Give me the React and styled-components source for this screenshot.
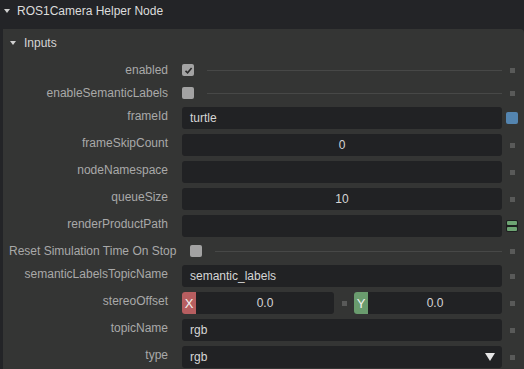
import React from "react"
import styled, { createGlobalStyle } from "styled-components"

const GlobalStyle = createGlobalStyle`
  html, body {
    margin: 0;
    padding: 0;
    background-color: #232427;
    font-family: "Liberation Sans", Arial, sans-serif;
    overflow: hidden;
  }
`

const Page = styled.div`
  width: 524px;
  height: 369px;
  background-color: #232427;
  overflow: hidden;
`

const TitleBar = styled.div`
  height: 22px;
  display: flex;
  align-items: center;
  gap: 7px;
  padding-left: 4px;
  color: #dcdcdc;
  font-size: 12px;
`

const Caret = styled.span`
  width: 0;
  height: 0;
  border-left: ${(p) => p.size}px solid transparent;
  border-right: ${(p) => p.size}px solid transparent;
  border-top: ${(p) => p.size + 1}px solid ${(p) => p.color || "#d0d0d0"};
`

const Panel = styled.section`
  margin: 7px 0 0 3px;
  background-color: #343534;
  border-top-right-radius: 4px;
  padding: 0 2px 8px 0;
`

const PanelHeader = styled.div`
  height: 28px;
  display: flex;
  align-items: center;
  gap: 8px;
  padding-left: 7px;
  color: #d4d4d4;
  font-size: 12px;
`

const Rows = styled.div`
  display: flex;
  flex-direction: column;
  gap: 5px;
  padding-top: 4px;
`

const Row = styled.div`
  display: flex;
  align-items: center;
  height: ${(p) => (p.$compact ? 18 : 22)}px;
`

const Label = styled.div`
  box-sizing: border-box;
  min-width: 165px;
  padding-left: 6px;
  margin-right: 14px;
  text-align: right;
  white-space: nowrap;
  color: #a9a9a9;
  font-size: 12px;
  line-height: 22px;
  align-self: flex-start;
  margin-top: -2px;
`

const Control = styled.div`
  flex: 1;
  display: flex;
  align-items: center;
  height: 100%;
  min-width: 0;
`

const Checkbox = styled.span`
  width: 12px;
  height: 12px;
  border-radius: 2px;
  background-color: #a3a3a3;
  display: flex;
  align-items: center;
  justify-content: center;
  flex-shrink: 0;
`

const Track = styled.span`
  flex: 1;
  height: 1px;
  margin-left: 13px;
  background-color: #474847;
`

const Field = styled.div`
  box-sizing: border-box;
  flex: 1;
  height: 22px;
  display: flex;
  align-items: center;
  justify-content: ${(p) => (p.$center ? "center" : "space-between")};
  padding: 0 ${(p) => (p.$center ? 0 : 7)}px 0 ${(p) => (p.$center ? 0 : 8)}px;
  background-color: #212224;
  border-radius: 3px;
  color: #d6d6d6;
  font-size: 12px;
  overflow: hidden;
`

const VectorGrid = styled.div`
  flex: 1;
  display: grid;
  grid-template-columns: 152px 20px 1fr;
  align-items: center;
  height: 22px;
`

const AxisField = styled.div`
  height: 22px;
  display: flex;
  align-items: center;
  background-color: #212224;
  border-radius: 3px;
  color: #d6d6d6;
  font-size: 12px;
`

const AxisBadge = styled.span`
  width: 14px;
  height: 22px;
  border-radius: 3px 0 0 3px;
  background-color: ${(p) => p.color};
  color: #f0f0f0;
  font-size: 13px;
  display: flex;
  align-items: center;
  justify-content: center;
`

const AxisValue = styled.span`
  flex: 1;
  text-align: center;
`

const Indicator = styled.div`
  width: 20px;
  display: flex;
  align-items: center;
  justify-content: center;
  flex-shrink: 0;
`

const Dot = styled.span`
  width: 5px;
  height: 5px;
  background-color: #595a59;
  display: block;
`

const ConnectedDot = styled.span`
  width: 12px;
  height: 12px;
  border-radius: 2px;
  background-color: #5485b0;
  display: block;
`

const BundleDot = styled.span`
  box-sizing: border-box;
  width: 12px;
  height: 12px;
  border-radius: 2px;
  padding: 1px;
  background-color: #1d1e1f;
  display: flex;
  flex-direction: column;
  justify-content: space-between;
  > span {
    height: 4px;
    border-radius: 1px;
    background-color: #6da473;
  }
`

const DropArrow = styled.span`
  width: 0;
  height: 0;
  border-left: 5px solid transparent;
  border-right: 5px solid transparent;
  border-top: 8px solid #e6e6e6;
`

const Check = () => (
  <svg width="9" height="9" viewBox="0 0 9 9">
    <path d="M1.5 4.8 L3.6 6.8 L7.6 2" fill="none" stroke="#2a2a2a" strokeWidth="1.6" />
  </svg>
)

const BoolRow = ({ label, checked }) => (
  <Row $compact>
    <Label>{label}</Label>
    <Control>
      <Checkbox>{checked ? <Check /> : null}</Checkbox>
      <Track />
    </Control>
    <Indicator>
      <Dot />
    </Indicator>
  </Row>
)

const TextRow = ({ label, value, center, port, dropdown }) => (
  <Row>
    <Label>{label}</Label>
    <Field $center={center}>
      <span>{value}</span>
      {dropdown ? <DropArrow /> : null}
    </Field>
    <Indicator>
      {port === "connected" ? <ConnectedDot /> : null}
      {port === "bundle" ? (
        <BundleDot>
          <span />
          <span />
        </BundleDot>
      ) : null}
      {!port ? <Dot /> : null}
    </Indicator>
  </Row>
)

const rows = [
  { kind: "bool", label: "enabled", checked: true },
  { kind: "bool", label: "enableSemanticLabels" },
  { kind: "text", label: "frameId", value: "turtle", port: "connected" },
  { kind: "text", label: "frameSkipCount", value: "0", center: true },
  { kind: "text", label: "nodeNamespace", value: "" },
  { kind: "text", label: "queueSize", value: "10", center: true },
  { kind: "text", label: "renderProductPath", value: "", port: "bundle" },
  { kind: "bool", label: "Reset Simulation Time On Stop" },
  { kind: "text", label: "semanticLabelsTopicName", value: "semantic_labels" },
  { kind: "vector", label: "stereoOffset" },
  { kind: "text", label: "topicName", value: "rgb" },
  { kind: "text", label: "type", value: "rgb", dropdown: true },
]

const App = () => {
  return (
    <Page>
      <GlobalStyle />
      <TitleBar>
        <Caret size={3.5} />
        <span>ROS1Camera Helper Node</span>
      </TitleBar>

      <Panel>
        <PanelHeader>
          <Caret size={3.5} />
          <span>Inputs</span>
        </PanelHeader>

        <Rows>
          {rows.map((row) => {
            if (row.kind === "bool") {
              return <BoolRow key={row.label} label={row.label} checked={row.checked} />
            }
            if (row.kind === "vector") {
              return (
                <Row key={row.label}>
                  <Label>{row.label}</Label>
                  <VectorGrid>
                    <AxisField>
                      <AxisBadge color="#b75e60">X</AxisBadge>
                      <AxisValue>0.0</AxisValue>
                    </AxisField>
                    <Indicator>
                      <Dot />
                    </Indicator>
                    <AxisField>
                      <AxisBadge color="#6a9c6e">Y</AxisBadge>
                      <AxisValue>0.0</AxisValue>
                    </AxisField>
                  </VectorGrid>
                  <Indicator>
                    <Dot />
                  </Indicator>
                </Row>
              )
            }
            return <TextRow key={row.label} {...row} />
          })}
        </Rows>
      </Panel>
    </Page>
  )
}

export default App
